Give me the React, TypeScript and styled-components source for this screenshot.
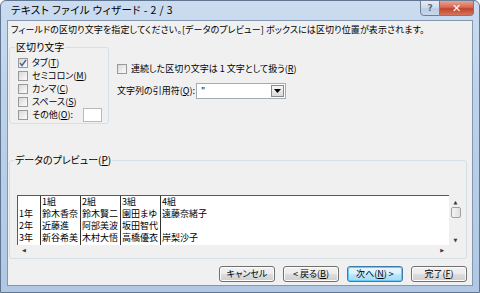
import styled, { createGlobalStyle } from "styled-components";

const GlobalStyle = createGlobalStyle`
  html, body {
    margin: 0;
    padding: 0;
    overflow: hidden;
    background: #fff;
  }
  body {
    font-family: "Noto Sans CJK JP", "Noto Sans", sans-serif;
    font-feature-settings: "palt";
    color: #000;
  }
`;

const Window = styled.div`
  width: 480px;
  height: 293px;
  box-sizing: border-box;
  display: flex;
  flex-direction: column;
  background: linear-gradient(180deg, #cbdcf0 0%, #bed3eb 30%, #b0c8e4 100%);
  border: 1px solid #5f7590;
  border-radius: 6px 6px 0 0;
  padding: 0 6px 6px;
`;

const TitleBar = styled.div`
  height: 19px;
  display: flex;
  align-items: flex-start;
  justify-content: space-between;
`;

const Title = styled.div`
  font-size: 10.5px;
  line-height: 12px;
  padding: 3px 0 0 4px;
  letter-spacing: 0.4px;
`;

const Caption = styled.div`
  display: flex;
  margin-top: -1px;
  margin-right: -1px;
`;

const CaptionButton = styled.div<{ $close?: boolean }>`
  width: ${(p) => (p.$close ? "34px" : "20px")};
  height: 16px;
  box-sizing: border-box;
  display: flex;
  align-items: center;
  justify-content: center;
  border: 1px solid #6d7f96;
  border-left-width: ${(p) => (p.$close ? "0" : "1px")};
  border-radius: ${(p) => (p.$close ? "0 0 4px 0" : "0 0 0 4px")};
  background: ${(p) =>
    p.$close
      ? "linear-gradient(180deg, #e8a493 0%, #d46a55 45%, #c4432c 55%, #d5745c 100%)"
      : "linear-gradient(180deg, #e4ecf5 0%, #cfdcec 45%, #bccde2 55%, #c9d8ea 100%)"};
  color: ${(p) => (p.$close ? "#fff" : "#5d6b7d")};
  font-family: "DejaVu Sans", sans-serif;
  font-size: ${(p) => (p.$close ? "11px" : "9px")};
  font-weight: bold;
`;

const Client = styled.div`
  flex: 1;
  display: flex;
  flex-direction: column;
  background: #f0f0f0;
  border: 1px solid #8497ae;
  padding: 0 5px 3px 1px;
  font-size: 9px;
  line-height: 12px;
`;

const Instruction = styled.div`
  padding: 3px 0 0 2px;
  white-space: nowrap;
  letter-spacing: 0.1px;
`;

const TopRow = styled.div`
  display: flex;
  margin-top: 5px;
`;

const Group = styled.fieldset<{ $width?: string }>`
  margin: 0;
  width: ${(p) => p.$width ?? "auto"};
  box-sizing: border-box;
  border: 1px solid #d5dfe5;
  border-radius: 3px;
  padding: 0 6px 2px 8px;
  min-width: 0;
`;

const Legend = styled.legend`
  padding: 0 1px;
  margin-left: -3px;
  font-size: 10px;
  line-height: 12px;
`;

const CheckList = styled.div`
  display: flex;
  flex-direction: column;
  padding-top: 3px;
`;

const CheckRow = styled.label`
  display: flex;
  align-items: center;
  gap: 4px;
  height: 13px;
  white-space: nowrap;
`;

const Box = styled.span`
  width: 10px;
  height: 10px;
  box-sizing: border-box;
  flex: none;
  border: 1px solid #999;
  background: linear-gradient(135deg, #d8d8d8 0%, #eeeeee 60%, #fafafa 100%);
  display: flex;
  align-items: center;
  justify-content: center;
`;

const OtherInput = styled.span`
  width: 26px;
  height: 14px;
  box-sizing: border-box;
  margin-left: 6px;
  background: #fff;
  border: 1px solid #b5b9c0;
`;

const Options = styled.div`
  display: flex;
  flex-direction: column;
  margin-left: 8px;
  padding-top: 21px;
`;

const QuoteRow = styled.div`
  display: flex;
  align-items: center;
  margin-top: 8px;
  white-space: nowrap;
`;

const QuoteLabel = styled.span`
  width: 79px;
`;

const Select = styled.div`
  width: 90px;
  height: 16px;
  box-sizing: border-box;
  display: flex;
  align-items: center;
  justify-content: space-between;
  background: #fff;
  border: 1px solid #a5acb5;
  padding: 0 1px 0 4px;
`;

const DropButton = styled.span`
  width: 13px;
  height: 12px;
  box-sizing: border-box;
  display: flex;
  align-items: center;
  justify-content: center;
  border: 1px solid #8a8a8a;
  background: linear-gradient(180deg, #f6f6f6 0%, #dadada 100%);
`;

const PreviewGroup = styled(Group)`
  margin-top: 30px;
  padding: 0 4px 4px 7px;
`;

const PreviewArea = styled.div`
  margin-top: 29px;
  display: grid;
  grid-template-columns: 1fr 13px;
  grid-template-rows: 50px 9px;
`;

const Sheet = styled.div`
  display: flex;
  background: #fff;
  border-top: 1px solid #5a5a5a;
  border-left: 1px solid #5a5a5a;
  overflow: hidden;
  padding-top: 1px;
`;

const Column = styled.div<{ $width?: number; $last?: boolean }>`
  width: ${(p) => (p.$width ? `${p.$width}px` : "auto")};
  flex: ${(p) => (p.$width ? "none" : "1")};
  box-sizing: border-box;
  border-right: ${(p) => (p.$last ? "none" : "1px solid #333")};
  padding-left: 1px;
  font-size: 9px;
  line-height: 12px;
  white-space: nowrap;
  overflow: hidden;
  margin-top: -1px;
`;

const Cell = styled.div`
  height: 12px;
`;

const VScroll = styled.div`
  display: flex;
  flex-direction: column;
  align-items: center;
  padding: 4px 0 2px;
  background: #f0f0f0;
`;

const Arrow = styled.span`
  font-family: "DejaVu Sans", sans-serif;
  font-size: 5px;
  line-height: 6px;
  color: #3a3a3a;
`;

const Thumb = styled.span`
  width: 10px;
  height: 11px;
  box-sizing: border-box;
  margin: 2px 0 auto;
  border: 1px solid #a0a0a0;
  border-radius: 2px;
  background: linear-gradient(90deg, #f4f4f4 0%, #e0e0e0 100%);
`;

const HScroll = styled.div`
  display: flex;
  align-items: center;
  justify-content: space-between;
  padding: 0 5px;
  background: #f0f0f0;
`;

const ButtonRow = styled.div`
  display: flex;
  justify-content: flex-end;
  gap: 8px;
  margin-top: 7px;
`;

const Button = styled.div<{ $focused?: boolean }>`
  width: 56px;
  height: 16px;
  box-sizing: border-box;
  display: flex;
  align-items: center;
  justify-content: center;
  border: 1px solid ${(p) => (p.$focused ? "#3d7bad" : "#707070")};
  border-radius: 3px;
  background: ${(p) =>
    p.$focused
      ? "linear-gradient(180deg, #eaf6fd 0%, #d9f0fc 50%, #bee6fd 51%, #a7d9f5 100%)"
      : "linear-gradient(180deg, #f2f2f2 0%, #ebebeb 50%, #dddddd 51%, #cfcfcf 100%)"};
  box-shadow: ${(p) => (p.$focused ? "inset 0 0 0 1px #63c9f5" : "inset 0 0 0 1px #fcfcfc")};
  font-size: 9px;
  white-space: nowrap;
`;

const Check = ({ checked }: { checked?: boolean }) => (
  <Box>
    {checked && (
      <svg width="8" height="8" viewBox="0 0 8 8">
        <path d="M1 4 L3 6.5 L7 1" fill="none" stroke="#4b61a0" strokeWidth="1.4" />
      </svg>
    )}
  </Box>
);

const delimiters = [
  { label: "タブ", key: "T", checked: true },
  { label: "セミコロン", key: "M" },
  { label: "カンマ", key: "C" },
  { label: "スペース", key: "S" },
];

const preview = [
  { width: 23, cells: ["", "1年", "2年", "3年"] },
  { width: 40, cells: ["1組", "鈴木香奈", "近藤進", "新谷希美"] },
  { width: 40, cells: ["2組", "鈴木賢二", "阿部美波", "木村大悟"] },
  { width: 40, cells: ["3組", "園田まゆ", "坂田智代", "高橋優衣"] },
  { cells: ["4組", "遠藤奈緒子", "", "岸梨沙子"] },
];

const App = () => {
  return (
    <>
      <GlobalStyle />
      <Window>
        <TitleBar>
          <Title>テキスト ファイル ウィザード - 2 / 3</Title>
          <Caption>
            <CaptionButton>?</CaptionButton>
            <CaptionButton $close>✕</CaptionButton>
          </Caption>
        </TitleBar>
        <Client>
          <Instruction>
            フィールドの区切り文字を指定してください。[データのプレビュー] ボックスには区切り位置が表示されます。
          </Instruction>
          <TopRow>
            <Group $width="100px">
              <Legend>区切り文字</Legend>
              <CheckList>
                {delimiters.map((d) => (
                  <CheckRow key={d.key}>
                    <Check checked={d.checked} />
                    <span>
                      {d.label}(<u>{d.key}</u>)
                    </span>
                  </CheckRow>
                ))}
                <CheckRow>
                  <Check />
                  <span>
                    その他(<u>O</u>):
                  </span>
                  <OtherInput />
                </CheckRow>
              </CheckList>
            </Group>
            <Options>
              <CheckRow>
                <Check />
                <span>
                  連続した区切り文字は 1 文字として扱う(<u>R</u>)
                </span>
              </CheckRow>
              <QuoteRow>
                <QuoteLabel>
                  文字列の引用符(<u>Q</u>):
                </QuoteLabel>
                <Select>
                  <span>"</span>
                  <DropButton>
                    <svg width="7" height="4" viewBox="0 0 7 4">
                      <path d="M0 0 H7 L3.5 4 Z" fill="#000" />
                    </svg>
                  </DropButton>
                </Select>
              </QuoteRow>
            </Options>
          </TopRow>
          <PreviewGroup>
            <Legend>
              データのプレビュー(<u>P</u>)
            </Legend>
            <PreviewArea>
              <Sheet>
                {preview.map((col, i) => (
                  <Column key={i} $width={col.width} $last={i === preview.length - 1}>
                    {col.cells.map((c, j) => (
                      <Cell key={j}>{c}</Cell>
                    ))}
                  </Column>
                ))}
              </Sheet>
              <VScroll>
                <Arrow>▲</Arrow>
                <Thumb />
                <Arrow>▼</Arrow>
              </VScroll>
              <HScroll>
                <Arrow>◀</Arrow>
                <Arrow>▶</Arrow>
              </HScroll>
              <VScroll />
            </PreviewArea>
          </PreviewGroup>
          <ButtonRow>
            <Button>キャンセル</Button>
            <Button>&lt; 戻る(<u>B</u>)</Button>
            <Button $focused>次へ(<u>N</u>) &gt;</Button>
            <Button>完了(<u>F</u>)</Button>
          </ButtonRow>
        </Client>
      </Window>
    </>
  );
};

export default App;
